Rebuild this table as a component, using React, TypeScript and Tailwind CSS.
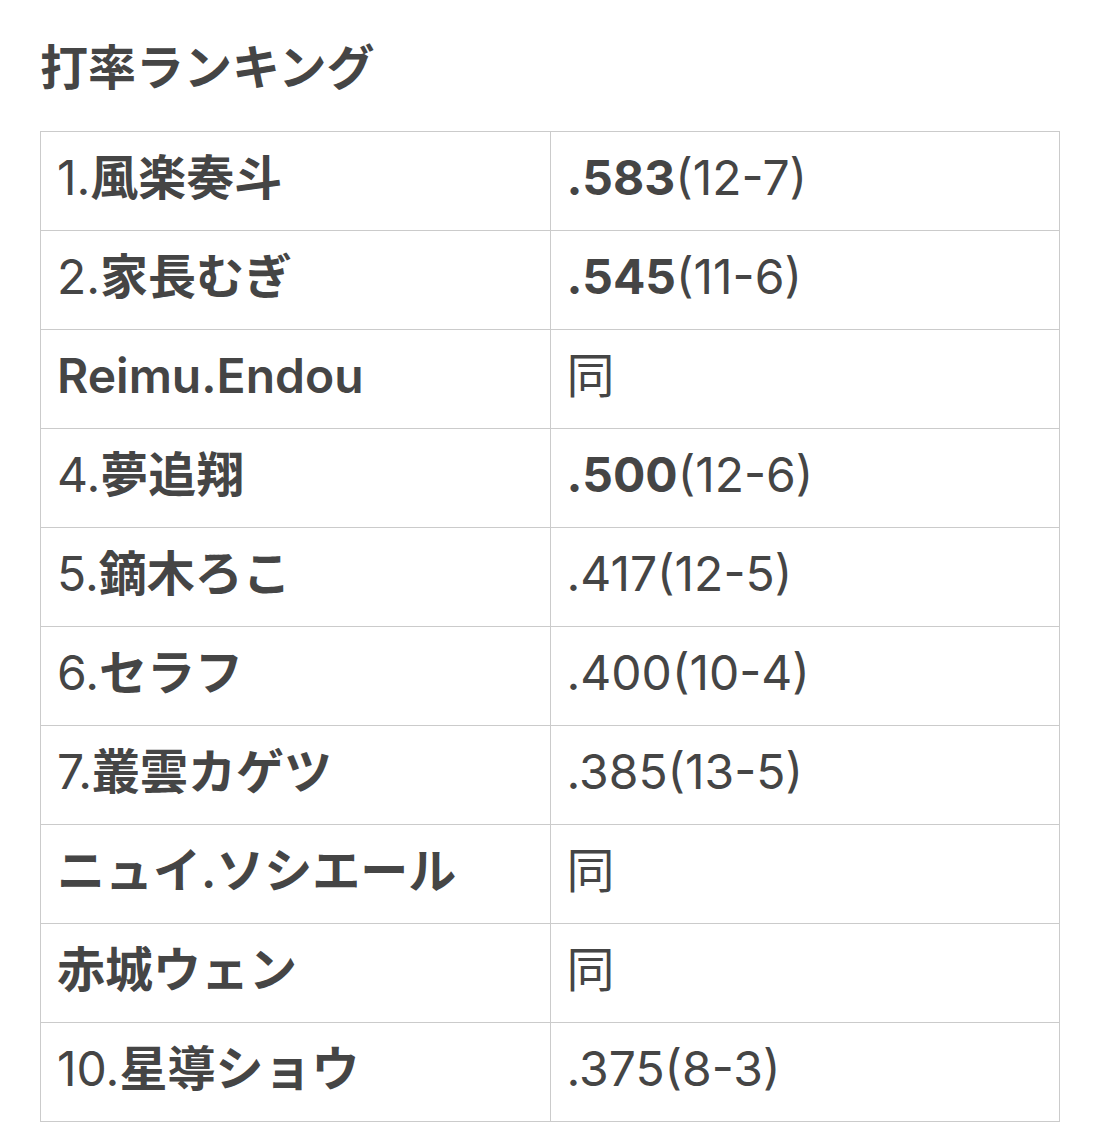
const rows: { rank: string; name: string; avg: string; detail: string; strong: boolean }[] = [
  { rank: "1.", name: "風楽奏斗", avg: ".583", detail: "(12-7)", strong: true },
  { rank: "2.", name: "家長むぎ", avg: ".545", detail: "(11-6)", strong: true },
  { rank: "", name: "Reimu.Endou", avg: "", detail: "同", strong: false },
  { rank: "4.", name: "夢追翔", avg: ".500", detail: "(12-6)", strong: true },
  { rank: "5.", name: "鏑木ろこ", avg: "", detail: ".417(12-5)", strong: false },
  { rank: "6.", name: "セラフ", avg: "", detail: ".400(10-4)", strong: false },
  { rank: "7.", name: "叢雲カゲツ", avg: "", detail: ".385(13-5)", strong: false },
  { rank: "", name: "ニュイ.ソシエール", avg: "", detail: "同", strong: false },
  { rank: "", name: "赤城ウェン", avg: "", detail: "同", strong: false },
  { rank: "10.", name: "星導ショウ", avg: "", detail: ".375(8-3)", strong: false },
];

function RankRow({ row }: { row: (typeof rows)[number] }) {
  return (
    <>
      <div className="flex h-[99px] items-center border-b border-r border-[#cbcbcb] px-4 pb-[6px]">
        {row.rank && <span className="font-normal">{row.rank}</span>}
        <span className="font-semibold">{row.name}</span>
      </div>
      <div className="flex h-[99px] items-center border-b border-r border-[#cbcbcb] px-4 pb-[6px]">
        {row.strong && <span className="font-bold">{row.avg}</span>}
        <span className="font-normal">{row.detail}</span>
      </div>
    </>
  );
}

export default function App() {
  return (
    <div
      className="min-h-[1122px] bg-white pl-[40px] pt-[44px] text-[#454545]"
      style={{ fontFamily: 'Inter, "Noto Sans CJK JP", sans-serif' }}
    >
      <h1 className="text-[48px] font-semibold leading-[48px]">打率ランキング</h1>
      <div className="mt-[39px] grid w-[1020px] grid-cols-2 border-l border-t border-[#cbcbcb] text-[48px] leading-none">
        {rows.map((row) => (
          <RankRow key={row.name} row={row} />
        ))}
      </div>
    </div>
  );
}
